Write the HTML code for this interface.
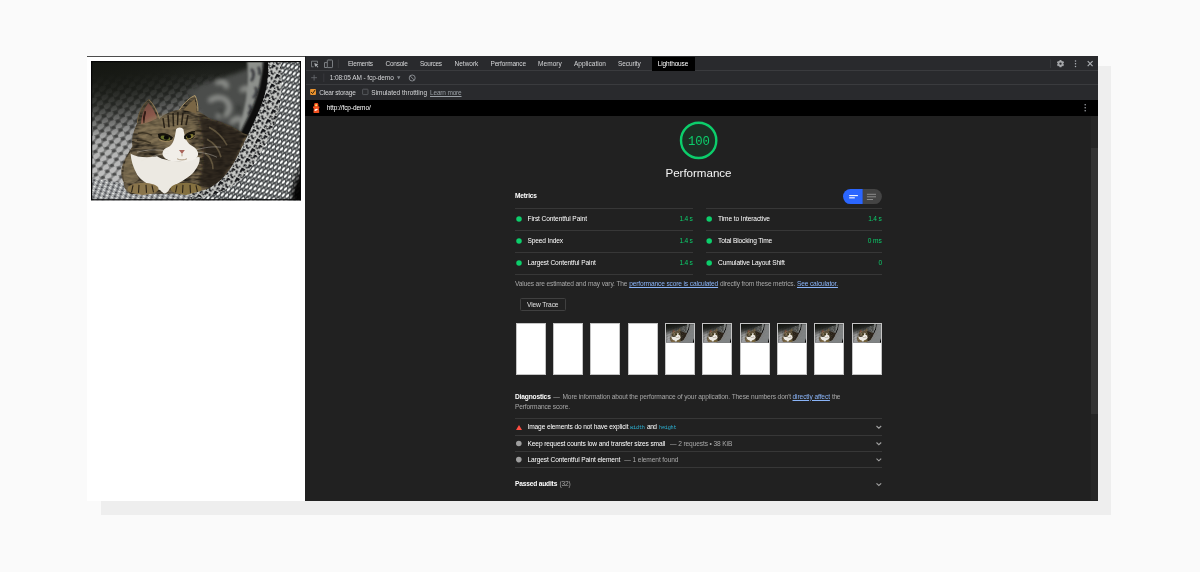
<!DOCTYPE html>
<html><head><meta charset="utf-8"><title>Lighthouse report - fcp-demo</title>
<style>
html,body{margin:0;padding:0;}
body{width:1200px;height:572px;background:#fafafa;position:relative;overflow:hidden;font-family:"Liberation Sans",sans-serif;}
.a{position:absolute;}
.t{position:absolute;white-space:pre;line-height:10px;font-size:6.6px;}
.hl{position:absolute;height:1px;background:#373737;}
.dot{position:absolute;width:5.500px;height:5.500px;border-radius:50%;}
.th{position:absolute;top:323px;width:30px;height:52px;background:#fff;overflow:hidden;box-sizing:border-box;border:1px solid #c4c4c4;}
svg{position:absolute;overflow:visible;}
</style></head><body>
<svg width="0" height="0" style="position:absolute">
<defs>
<linearGradient id="bgv" x1="0" y1="0" x2="0" y2="1">
 <stop offset="0" stop-color="#181a16"/><stop offset="0.2" stop-color="#272926"/>
 <stop offset="0.42" stop-color="#585958"/><stop offset="0.65" stop-color="#7e7f7e"/><stop offset="1" stop-color="#939395"/>
</linearGradient>
<radialGradient id="vig" cx="0" cy="0" r="1" gradientUnits="userSpaceOnUse" gradientTransform="translate(0 0) scale(120 75)">
 <stop offset="0" stop-color="#151712" stop-opacity="0.950"/><stop offset="0.6" stop-color="#151712" stop-opacity="0.500"/><stop offset="1" stop-color="#151712" stop-opacity="0"/>
</radialGradient>
<radialGradient id="vig2" cx="210" cy="139" r="1" gradientUnits="userSpaceOnUse" gradientTransform="translate(212 141) scale(15 40) translate(-210 -139)">
 <stop offset="0" stop-color="#000" stop-opacity="1"/><stop offset="0.550" stop-color="#000" stop-opacity="0.950"/><stop offset="1" stop-color="#000" stop-opacity="0"/>
</radialGradient>
<pattern id="knit" width="12" height="9" patternUnits="userSpaceOnUse" patternTransform="rotate(-16)">
 <ellipse cx="3.300" cy="2.400" rx="4" ry="2.500" fill="#fff" opacity="0.620" transform="rotate(-24 3.300 2.400)"/>
 <ellipse cx="9.300" cy="6.900" rx="4" ry="2.500" fill="#fff" opacity="0.620" transform="rotate(-24 9.300 6.900)"/>
 <ellipse cx="9.300" cy="2.400" rx="2.100" ry="1.400" fill="#000" opacity="0.600"/>
 <ellipse cx="3.300" cy="6.900" rx="2.100" ry="1.400" fill="#000" opacity="0.600"/>
</pattern>
<linearGradient id="knitfade" x1="0" y1="0" x2="0" y2="1">
 <stop offset="0.08" stop-color="#000"/><stop offset="0.28" stop-color="#555"/><stop offset="0.55" stop-color="#ccc"/><stop offset="1" stop-color="#fff"/>
</linearGradient>
<mask id="knitmask"><rect width="210" height="139" fill="url(#knitfade)"/></mask>
<pattern id="herr" width="8" height="6.600" patternUnits="userSpaceOnUse" patternTransform="rotate(-40) skewX(-24)">
 <rect width="8" height="6.600" fill="#3e4144"/>
 <ellipse cx="2.100" cy="1.650" rx="2.200" ry="1.200" fill="#f8faf8"/>
 <ellipse cx="6.100" cy="4.950" rx="2.200" ry="1.200" fill="#f8faf8"/>
 <ellipse cx="6.100" cy="1.650" rx="1.500" ry="0.850" fill="#9a9e9c"/>
 <ellipse cx="2.100" cy="4.950" rx="1.500" ry="0.850" fill="#9a9e9c"/>
</pattern>
<pattern id="speck" width="5" height="4" patternUnits="userSpaceOnUse" patternTransform="rotate(20)">
 <rect width="5" height="4" fill="#9c9ea0"/>
 <rect x="0" y="0" width="2.2" height="1.2" fill="#e8eae8"/><rect x="2.6" y="2" width="2" height="1.3" fill="#3a3c40"/>
 <rect x="3" y="0.3" width="1.2" height="0.9" fill="#50535a"/><rect x="0.4" y="2.4" width="1.4" height="1" fill="#d0d2d0"/>
</pattern>
<pattern id="pais" width="13" height="11" patternUnits="userSpaceOnUse" patternTransform="rotate(28)">
 <rect width="13" height="11" fill="#c6c8c5"/>
 <path d="M1 1h4v2.500h-2v2.500h-2zM7 0.500h2v1.500h2.500v2h-3v-1.500h-1.500zM6 5.500h3.500v1.500h-1.500v2.500h-2zM10.500 6h2v3.500h-1v-1.500h-1zM1.500 7.500h3v1.200h-1.500v1.800h-1.500zM4 9.500h2.500v1h-2.500zM11 0.500h1.500v1.200h-1.500zM5.500 3.200h1.300v1.300h-1.300z" fill="#141518"/>
</pattern>
<filter id="b1" x="-10%" y="-10%" width="120%" height="120%"><feGaussianBlur stdDeviation="1"/></filter>
<filter id="b2" x="-10%" y="-10%" width="120%" height="120%"><feGaussianBlur stdDeviation="2.2"/></filter>
<filter id="b05" x="-10%" y="-10%" width="120%" height="120%"><feGaussianBlur stdDeviation="0.5"/></filter>
<filter id="fur" x="0" y="0" width="100%" height="100%">
 <feTurbulence type="fractalNoise" baseFrequency="0.12 0.35" numOctaves="2" seed="4" result="n"/>
 <feColorMatrix in="n" type="matrix" values="0 0 0 0 0  0 0 0 0 0  0 0 0 0 0  1.6 0 0 0 -0.55" result="a"/>
 <feComposite in="a" in2="SourceGraphic" operator="in"/>
</filter>
<clipPath id="catclip"><rect width="210" height="139"/></clipPath>
<symbol id="cat" viewBox="0 0 210 139" preserveAspectRatio="none">
<g clip-path="url(#catclip)">
 <rect width="210" height="139" fill="url(#bgv)"/>
 <rect width="210" height="139" fill="url(#knit)" mask="url(#knitmask)" opacity="0.800" filter="url(#b05)"/>
 <!-- blurry paisley area behind cat -->
 <g filter="url(#b2)">
  <path d="M95 30C120 18 150 14 172 0L176 0C178 30 168 60 150 95L120 70Z" fill="#4c4e4c"/>
  <path d="M118 40c8-6 18-4 20 4s-6 14-12 10M140 62c6-8 14-4 12 4M125 22c6-3 12 0 10 5M150 30c4-5 10-3 9 3" stroke="#9a9c98" stroke-width="3.5" fill="none"/>
  <path d="M128 50c4 0 5 4 2 6M146 44c3 1 3 5 0 6" stroke="#2c2e2c" stroke-width="3" fill="none"/>
 </g>
 <!-- back band of fabric -->
 <path d="M156 0L176 0C178 14 175 26 172 34C166 48 160 60 150 78C146 70 150 60 153 48C157 32 158 16 156 0Z" fill="#8d908c" filter="url(#b1)"/>
 <path d="M160 8c4 3 3 9 0 12M164 26c3 3 1 8-2 11M158 44c3 2 2 7-1 9M167 6c2 2 2 6 1 8" stroke="#34363a" stroke-width="2.6" fill="none" filter="url(#b1)"/>
 <!-- shadow in fold -->
 <path d="M172 0L179 0C180 20 176 36 168 54C162 68 154 82 146 96L134 102C142 86 150 70 157 56C163 44 168 30 170 16C171 10 172 4 172 0Z" fill="#0b0c0d" filter="url(#b1)"/>
 <!-- floor fabric -->
 <path d="M0 117C20 119 40 124 60 128C90 133 110 131 125 126L210 100L210 139L0 139Z" fill="url(#speck)"/>
 <!-- cat body -->
 <g>
  <path d="M41.5 85C40 78 43 68 46.3 61.700C47 52 52 42 57.800 38.600C62 42 66 50 68.600 57.400C75 52 83 49 88.400 48.700C93 42 99 36 104 34.400C106.500 39 107.500 45 106.900 50.200C111 52 115 55 119.400 57.800C128 60 140 64 152 72L158 74L147 96L131 120C126 125 118 130 109.800 132L40 132.500C35 131 33 126 32.800 121.300C30 116 30 110 30.900 106C33 98 38 91 41.500 85Z" fill="#6e6048"/>
  <path d="M41.5 85C40 78 43 68 46.3 61.700C47 52 52 42 57.800 38.600C62 42 66 50 68.600 57.400C75 52 83 49 88.400 48.700C93 42 99 36 104 34.400C106.500 39 107.500 45 106.900 50.200C111 52 115 55 119.400 57.800C128 60 140 64 152 72L158 74L147 96L131 120C126 125 118 130 109.800 132L40 132.500C35 131 33 126 32.800 121.300C30 116 30 110 30.900 106C33 98 38 91 41.500 85Z" fill="#15110a" filter="url(#fur)"/>
  <!-- darker back of body -->
  <path d="M108 56C122 58 142 64 154 74L146 96L130 120C122 128 112 128 108 122C112 108 114 92 112 80Z" fill="#241d13" opacity="0.800" filter="url(#b1)"/>
  <path d="M118 66c8 4 14 10 18 18M116 78c8 4 12 10 14 18M114 92c6 4 8 10 8 16" stroke="#8a7a58" stroke-width="1.600" opacity="0.550" fill="none" filter="url(#b05)"/>
  <!-- left body lighter -->
  <path d="M40 90C34 98 31 108 33 120C38 124 44 122 48 118C44 110 41 100 40 90Z" fill="#8a7a5a" opacity="0.600" filter="url(#b05)"/>
  <!-- ears inner -->
  <path d="M57.500 42C53 47 50.500 55 50 63C55 62 61 60 66 57C64 51 61 45.500 57.500 42Z" fill="#a06454" filter="url(#b05)"/>
  <path d="M54.500 50C53 54 52.500 58 52.800 62" stroke="#3a1e18" stroke-width="2" fill="none" filter="url(#b05)"/>
  <path d="M57.800 38.600C62 42 66 50 68.600 57.400" stroke="#b49a6c" stroke-width="1" fill="none"/>
  <path d="M46.300 61.700C47 52 52 42 57.800 38.600" stroke="#8a744e" stroke-width="0.900" fill="none"/>
  <path d="M103.500 38C99 41.500 95.500 45.500 92.500 49C97 49.500 102 50.500 105.500 52.500C105.800 47 105 42 103.500 38Z" fill="#7a6644" filter="url(#b05)"/>
  <path d="M88.400 48.700C93 42 99 36 104 34.400C106 38 107 44 106.900 50.200" stroke="#b8a070" stroke-width="0.900" fill="none"/>
  <!-- head lighter -->
  <ellipse cx="77" cy="70" rx="30" ry="17" fill="#958360" opacity="0.500" filter="url(#b1)"/>
  <path d="M72 57l1.500 10M77 54l1 12M82 52l0.500 13M87 51l-0.500 13M92 52l-1.500 12M97 54l-2 10" stroke="#1c160e" stroke-width="1.500" opacity="0.850"/>
  <path d="M47 72c5-1 10 0 14 2M46 79c5 0 10 1 14 3M104 70c3-1 5-1 7 0" stroke="#2a2216" stroke-width="1.400" opacity="0.700" fill="none"/>
  <!-- white chest -->
  <path d="M39.600 92.500C46 96 56 97 66 95C74 100 92 102 100 98C104 96 108 95 108.800 96.300C109 102 106 107 102 111.700C96 118 86 122 79 127C77 131 75 132.500 73 132C71 131 70 130 69.400 129C60 125 50 119 46.300 113.600C42 106 40 99 39.600 92.500Z" fill="#ece9e2" filter="url(#b05)"/>
  <!-- muzzle + blaze white -->
  <path d="M85 68.400C86.500 65.500 91 65.500 92.500 68.400C93.500 75 95 81 100 84C106 87 109 92 106 96C102 100 94 101 88.600 100.500C82 101 75 99 72.300 95C70 91 73 87 78 85.500C82.500 83 84 76 85 68.400Z" fill="#f1eee8" filter="url(#b05)"/>
  <!-- eyes -->
  <ellipse cx="74.200" cy="76.100" rx="7.200" ry="3.500" fill="#15120b" transform="rotate(12 74.200 76.100)"/>
  <ellipse cx="74.600" cy="76.700" rx="5" ry="2.100" fill="#66702a" transform="rotate(12 74.200 76.100)"/>
  <ellipse cx="75.400" cy="76.500" rx="2.600" ry="2.100" fill="#0a0a07"/>
  <path d="M67 73.500C71 72 77 73 81.500 77" stroke="#15120b" stroke-width="1.600" fill="none"/>
  <path d="M68 78.500C72 80.500 77 80.500 81 79" stroke="#c8a86c" stroke-width="0.700" fill="none" opacity="0.800"/>
  <ellipse cx="98.600" cy="74.800" rx="5.800" ry="3.400" fill="#15120b" transform="rotate(-22 98.600 74.800)"/>
  <ellipse cx="98.600" cy="75.400" rx="4" ry="2.100" fill="#7a7430" transform="rotate(-22 98.600 74.800)"/>
  <ellipse cx="98" cy="75.200" rx="2.100" ry="2.100" fill="#0a0a07"/>
  <path d="M93.500 76C96 72.500 100 70.500 104 70.500" stroke="#15120b" stroke-width="1.500" fill="none"/>
  <path d="M94.500 78.500C98 78.500 102 76.500 104 73.500" stroke="#c8a86c" stroke-width="0.700" fill="none" opacity="0.800"/>
  <!-- nose & mouth -->
  <path d="M88 88.800L93.800 88.800L91 92.800Z" fill="#a8645a"/>
  <path d="M91 92.800V95M86 97.500c3 1.500 7 1.500 10 0" stroke="#a89478" stroke-width="0.900" fill="none"/>
  <!-- paws -->
  <ellipse cx="52" cy="127.500" rx="15.500" ry="6" fill="#8a744c" filter="url(#b05)"/>
  <ellipse cx="95" cy="127.500" rx="15.500" ry="6" fill="#84703f" filter="url(#b05)"/>
  <path d="M42 124l-1.500 7M48 123.500l-0.500 8M55 123.500l0.500 8M61 124l1.500 7M86 124l-1.500 7M92 123.500l-0.500 8M99 123.500l0.500 8M105 124l1.500 7" stroke="#2a2216" stroke-width="1.100"/>
  <!-- whiskers -->
  <path d="M78 90C66 88 56 88 46 91M78 92C66 93 58 96 50 100M104 89C114 86 122 85 130 86M104 91C113 91 120 93 126 96" stroke="#e8e4da" stroke-width="0.450" fill="none" opacity="0.800"/>
 </g>
 <!-- right fabric -->
 <path d="M177 0L210 0L210 139L92 139C106 134 118 128 126 122C136 114 142 104 148 92C158 72 166 56 172 40C176 28 178 14 177 0Z" fill="url(#herr)"/>
 <!-- paisley border of right fabric -->
 <path d="M177 0L190 0C192 22 190 44 184 62C176 84 164 104 148 120C138 128 126 133 112 136L96 133C112 130 120 127 126 122C136 114 142 104 148 92C158 72 166 56 172 40C176 28 178 14 177 0Z" fill="url(#pais)"/>
 <rect width="210" height="139" fill="url(#vig)"/>
 <rect width="210" height="139" fill="url(#vig2)"/>
 <rect x="0.500" y="0.500" width="209" height="138" fill="none" stroke="#050505" stroke-width="1.400"/>
</g>
</symbol>
</defs>
</svg>

<div class="a" style="left:101px;top:66px;width:1009.8px;height:449px;background:#eeeeee"></div>
<div class="a" style="left:87px;top:56px;width:218px;height:444.5px;background:#fff"></div>
<div class="a" style="left:87px;top:56px;width:218px;height:1px;background:#4c4c4c"></div>
<svg class="a" style="left:91px;top:61px" width="210" height="139.400"><use href="#cat" width="210" height="139.400"/></svg>

<!-- devtools -->
<div class="a" style="left:305px;top:56px;width:793px;height:444.5px;background:#212121"></div>
<div class="a" style="left:305px;top:56px;width:793px;height:43.7px;background:#292a2d"></div>
<div class="a" style="left:305px;top:70px;width:793px;height:1px;background:#3a3b3e"></div>
<div class="a" style="left:305px;top:84px;width:793px;height:1px;background:#3a3b3e"></div>
<div class="a" style="left:305px;top:99.600px;width:793px;height:16.200px;background:#000"></div>
<div class="a" style="left:652px;top:56.500px;width:43px;height:14px;background:#000"></div>
<div class="a" style="left:305px;top:56px;width:1px;height:43.600px;background:#1b1c1e"></div>
<!-- scrollbar -->
<div class="a" style="left:1091px;top:115.800px;width:7px;height:384.700px;background:#262626"></div>
<div class="a" style="left:1091px;top:148px;width:7px;height:266px;background:#333333"></div>

<!-- toolbar icons -->
<svg style="left:0;top:0" width="1200" height="572" viewBox="0 0 1200 572" fill="none">
 <!-- inspect -->
 <path d="M317.500 63.300V61.200H311.500V66.800H313.600" stroke="#7d8185" stroke-width="0.900"/>
 <path d="M314.300 62.900L318.400 64.500L316.800 65.200L318.400 67L317.600 67.600L316.100 65.800L315.200 67.100Z" fill="#a9adb1"/>
 <!-- device -->
 <rect x="327.300" y="60" width="5.200" height="7.600" rx="0.700" stroke="#84888c" stroke-width="0.900"/>
 <path d="M327 62.600H324.500V67.500H327.300" stroke="#84888c" stroke-width="0.900"/>
 <path d="M338.300 59.500V68" stroke="#3c3e41" stroke-width="0.800"/>
 <!-- plus -->
 <path d="M311.200 77.700H317M314.100 74.800V80.600" stroke="#64686c" stroke-width="0.900"/>
 <path d="M323.800 73.500V82" stroke="#3c3e41" stroke-width="0.800"/>
 <!-- dropdown arrow -->
 <path d="M397 76.200L400.400 76.200L398.700 79.400Z" fill="#84888c"/>
 <!-- clear -->
 <circle cx="412.200" cy="78" r="3" stroke="#8d9195" stroke-width="0.900"/>
 <path d="M410.100 75.900L414.300 80.100" stroke="#8d9195" stroke-width="0.900"/>
 <!-- checkboxes -->
 <rect x="310.100" y="88.900" width="5.900" height="6" rx="0.800" fill="#ea932f"/>
 <path d="M311.100 92L312.600 93.600L315.200 89.900" stroke="#2e210c" stroke-width="1"/>
 <rect x="362.600" y="89.200" width="5.400" height="5.400" rx="0.600" stroke="#5f6266" stroke-width="0.800" fill="#2c2d30"/>
 <!-- lighthouse logo -->
 <rect x="314.200" y="102.900" width="4.100" height="4" rx="1.300" fill="#f2501f"/>
 <circle cx="316.200" cy="105.400" r="1.050" fill="#ffdf60"/>
 <rect x="313" y="106.200" width="6.400" height="2.200" rx="0.900" fill="#f2501f"/>
 <path d="M313.900 108H318.800L319.300 112.300C319.300 112.800 319 113.100 318.500 113.100H314.100C313.600 113.100 313.300 112.800 313.400 112.300Z" fill="#f2501f"/>
 <ellipse cx="316.100" cy="109.800" rx="1.800" ry="0.850" fill="#fff" transform="rotate(-24 316.100 109.800)"/>
 <!-- right icons -->
 <path d="M1050.500 59.500V68" stroke="#3a3c3f" stroke-width="0.800"/>
 <g transform="translate(1060.500 63.650)">
  <circle r="2" stroke="#a4a6a9" stroke-width="1.700"/>
  <path d="M0.00 -2.30L0.00 -3.60M1.99 -1.15L3.12 -1.80M1.99 1.15L3.12 1.80M0.00 2.30L0.00 3.60M-1.99 1.15L-3.12 1.80M-1.99 -1.15L-3.12 -1.80" stroke="#a4a6a9" stroke-width="1.900"/>
 </g>
 <g fill="#aeb2b7"><circle cx="1075.500" cy="60.900" r="0.750"/><circle cx="1075.500" cy="63.700" r="0.750"/><circle cx="1075.500" cy="66.500" r="0.750"/></g>
 <path d="M1087.700 61.200L1092.600 66.100M1092.600 61.200L1087.700 66.100" stroke="#a8abaf" stroke-width="1.200"/>
 <g fill="#9a9da2"><circle cx="1085.200" cy="104.700" r="0.800"/><circle cx="1085.200" cy="107.700" r="0.800"/><circle cx="1085.200" cy="110.700" r="0.800"/></g>
 <!-- gauge -->
 <circle cx="698.650" cy="140.400" r="17.650" fill="#1b3024" stroke="#0cce6b" stroke-width="2.400"/>
 <!-- toggle -->
 <path d="M850.500 189.100H862.800V204.100H850.500A7.500 7.500 0 0 1 850.500 189.100Z" fill="#2b66ff"/>
 <path d="M862.800 189.100H874.400A7.500 7.500 0 0 1 874.400 204.100H862.800Z" fill="#444444"/>
 <path d="M849.200 195.600H857.900" stroke="#fff" stroke-width="1.100"/><path d="M849.200 197.800H854.800" stroke="#dfe6ff" stroke-width="1.300"/>
 <path d="M866.900 194.300H876M866.900 196.800H876M866.900 199.500H873" stroke="#8c8c8c" stroke-width="1"/>
 <circle cx="519" cy="219.100" r="2.750" fill="#0cce6b"/><circle cx="519" cy="241.100" r="2.750" fill="#0cce6b"/><circle cx="519" cy="263.100" r="2.750" fill="#0cce6b"/><circle cx="709.200" cy="219.100" r="2.750" fill="#0cce6b"/><circle cx="709.200" cy="241.100" r="2.750" fill="#0cce6b"/><circle cx="709.200" cy="263.100" r="2.750" fill="#0cce6b"/>
 <!-- audit icons -->
 <circle cx="518.800" cy="443.500" r="2.800" fill="#9e9e9e"/><circle cx="518.800" cy="459.600" r="2.800" fill="#9e9e9e"/>
 <path d="M519 424.900L522 429.900H516Z" fill="#ff4e42"/>
 <g fill="none" stroke="#a0a0a0" stroke-width="1.100">
  <path d="M876.500 426.000L878.850 428.200L881.200 426.000"/>
  <path d="M876.500 442.500L878.850 444.700L881.200 442.500"/>
  <path d="M876.500 458.600L878.850 460.800L881.200 458.600"/>
  <path d="M876.500 483.300L878.850 485.500L881.200 483.300"/>
 </g>
</svg>
<!-- dots -->
<!-- lines -->
<div class="hl" style="left:515px;top:208px;width:177.700px"></div>
<div class="hl" style="left:515px;top:230px;width:177.700px"></div>
<div class="hl" style="left:515px;top:252px;width:177.700px"></div>
<div class="hl" style="left:515px;top:274px;width:177.700px"></div>
<div class="hl" style="left:705.500px;top:208px;width:176.500px"></div>
<div class="hl" style="left:705.500px;top:230px;width:176.500px"></div>
<div class="hl" style="left:705.500px;top:252px;width:176.500px"></div>
<div class="hl" style="left:705.500px;top:274px;width:176.500px"></div>
<div class="hl" style="left:515px;top:418px;width:367px"></div>
<div class="hl" style="left:515px;top:435px;width:367px"></div>
<div class="hl" style="left:515px;top:451px;width:367px"></div>
<div class="hl" style="left:515px;top:467px;width:367px"></div>
<!-- view trace button -->
<div class="a" style="left:520px;top:298.300px;width:45.700px;height:12.600px;box-sizing:border-box;border:1px solid #404040;border-radius:1.500px"></div>
<!-- filmstrip -->
<div class="th" style="left:515.500px"></div>
<div class="th" style="left:552.800px"></div>
<div class="th" style="left:590.200px"></div>
<div class="th" style="left:627.500px"></div>
<div class="th" style="left:664.900px"><svg style="left:0.100px;top:0.100px" width="28.200" height="18.700"><use href="#cat" width="28.200" height="18.700"/></svg></div>
<div class="th" style="left:702.200px"><svg style="left:0.100px;top:0.100px" width="28.200" height="18.700"><use href="#cat" width="28.200" height="18.700"/></svg></div>
<div class="th" style="left:739.600px"><svg style="left:0.100px;top:0.100px" width="28.200" height="18.700"><use href="#cat" width="28.200" height="18.700"/></svg></div>
<div class="th" style="left:776.900px"><svg style="left:0.100px;top:0.100px" width="28.200" height="18.700"><use href="#cat" width="28.200" height="18.700"/></svg></div>
<div class="th" style="left:814.300px"><svg style="left:0.100px;top:0.100px" width="28.200" height="18.700"><use href="#cat" width="28.200" height="18.700"/></svg></div>
<div class="th" style="left:851.600px"><svg style="left:0.100px;top:0.100px" width="28.200" height="18.700"><use href="#cat" width="28.200" height="18.700"/></svg></div>
<!-- text -->
<div class="a" style="left:0;top:0;width:1200px;height:572px;will-change:transform">
<span class="t" style='left:348.0px;top:58.9px;font-size:6.5px;color:#d5d6d8;letter-spacing:-0.301px;'>Elements</span>
<span class="t" style='left:385.5px;top:58.9px;font-size:6.5px;color:#d5d6d8;letter-spacing:-0.260px;'>Console</span>
<span class="t" style='left:420.0px;top:58.9px;font-size:6.5px;color:#d5d6d8;letter-spacing:-0.310px;'>Sources</span>
<span class="t" style='left:454.6px;top:58.9px;font-size:6.5px;color:#d5d6d8;letter-spacing:-0.024px;'>Network</span>
<span class="t" style='left:490.5px;top:58.9px;font-size:6.5px;color:#d5d6d8;letter-spacing:-0.172px;'>Performance</span>
<span class="t" style='left:538.0px;top:58.9px;font-size:6.5px;color:#d5d6d8;letter-spacing:0.063px;'>Memory</span>
<span class="t" style='left:574.0px;top:58.9px;font-size:6.5px;color:#d5d6d8;letter-spacing:0.019px;'>Application</span>
<span class="t" style='left:618.0px;top:58.9px;font-size:6.5px;color:#d5d6d8;letter-spacing:-0.098px;'>Security</span>
<span class="t" style='left:657.8px;top:58.9px;font-size:6.5px;color:#ffffff;letter-spacing:-0.146px;'>Lighthouse</span>
<span class="t" style='left:329.7px;top:72.9px;font-size:6.5px;color:#d5d6d8;letter-spacing:-0.083px;'>1:08:05 AM - fcp-demo</span>
<span class="t" style='left:319.2px;top:87.8px;font-size:6.5px;color:#d5d6d8;letter-spacing:-0.203px;'>Clear storage</span>
<span class="t" style='left:371.3px;top:87.8px;font-size:6.5px;color:#d5d6d8;letter-spacing:0.003px;'>Simulated throttling</span>
<span class="t" style='left:430.0px;top:87.8px;font-size:6.5px;color:#9aa0a6;letter-spacing:-0.172px;text-decoration:underline;'>Learn more</span>
<span class="t" style='left:326.7px;top:102.7px;font-size:6.5px;color:#ffffff;letter-spacing:-0.071px;'>http://fcp-demo/</span>
<span class="t" style='left:687.9px;top:137.2px;font-size:12.3px;color:#0cce6b;letter-spacing:-0.070px;font-family:"Liberation Mono",monospace;'>100</span>
<span class="t" style='left:665.5px;top:168.2px;font-size:11.6px;color:#f5f5f5;letter-spacing:-0.037px;'>Performance</span>
<span class="t" style='left:515.0px;top:191.3px;font-size:6.6px;color:#ffffff;letter-spacing:-0.182px;font-weight:700;'>Metrics</span>
<span class="t" style='left:527.5px;top:214.2px;font-size:6.6px;color:#ffffff;letter-spacing:-0.099px;'>First Contentful Paint</span>
<span class="t" style='left:679.5px;top:214.2px;font-size:6.6px;color:#0cce6b;letter-spacing:-0.274px;'>1.4 s</span>
<span class="t" style='left:527.5px;top:236.2px;font-size:6.6px;color:#ffffff;letter-spacing:-0.153px;'>Speed Index</span>
<span class="t" style='left:679.5px;top:236.2px;font-size:6.6px;color:#0cce6b;letter-spacing:-0.274px;'>1.4 s</span>
<span class="t" style='left:527.5px;top:258.2px;font-size:6.6px;color:#ffffff;letter-spacing:-0.107px;'>Largest Contentful Paint</span>
<span class="t" style='left:679.5px;top:258.2px;font-size:6.6px;color:#0cce6b;letter-spacing:-0.274px;'>1.4 s</span>
<span class="t" style='left:718.0px;top:214.2px;font-size:6.6px;color:#ffffff;letter-spacing:-0.111px;'>Time to Interactive</span>
<span class="t" style='left:868.3px;top:214.2px;font-size:6.6px;color:#0cce6b;letter-spacing:-0.224px;'>1.4 s</span>
<span class="t" style='left:718.0px;top:236.2px;font-size:6.6px;color:#ffffff;letter-spacing:-0.140px;'>Total Blocking Time</span>
<span class="t" style='left:867.7px;top:236.2px;font-size:6.6px;color:#0cce6b;letter-spacing:-0.099px;'>0 ms</span>
<span class="t" style='left:718.0px;top:258.2px;font-size:6.6px;color:#ffffff;letter-spacing:-0.125px;'>Cumulative Layout Shift</span>
<span class="t" style='left:878.5px;top:258.2px;font-size:6.6px;color:#0cce6b;letter-spacing:0.000px;'>0</span>
<span class="t" style='left:515.0px;top:279.0px;font-size:6.6px;color:#a8a8a8;letter-spacing:-0.129px;'>Values are estimated and may vary. The</span>
<span class="t" style='left:629.2px;top:279.0px;font-size:6.6px;color:#8ab4f8;letter-spacing:-0.136px;text-decoration:underline;'>performance score is calculated</span>
<span class="t" style='left:720.0px;top:279.0px;font-size:6.6px;color:#a8a8a8;letter-spacing:-0.129px;'>directly from these metrics.</span>
<span class="t" style='left:797.0px;top:279.0px;font-size:6.6px;color:#8ab4f8;letter-spacing:-0.155px;text-decoration:underline;'>See calculator.</span>
<span class="t" style='left:527.0px;top:300.0px;font-size:6.6px;color:#e0e0e0;letter-spacing:-0.111px;'>View Trace</span>
<span class="t" style='left:515.0px;top:391.7px;font-size:6.6px;color:#ffffff;letter-spacing:-0.158px;font-weight:700;'>Diagnostics</span>
<span class="t" style='left:553.3px;top:391.7px;font-size:6.6px;color:#a8a8a8;letter-spacing:0.000px;'>—</span>
<span class="t" style='left:562.5px;top:391.7px;font-size:6.6px;color:#a8a8a8;letter-spacing:-0.123px;'>More information about the performance of your application. These numbers don&#x27;t</span>
<span class="t" style='left:792.5px;top:391.7px;font-size:6.6px;color:#8ab4f8;letter-spacing:-0.088px;text-decoration:underline;'>directly affect</span>
<span class="t" style='left:832.0px;top:391.7px;font-size:6.6px;color:#a8a8a8;letter-spacing:-0.336px;'>the</span>
<span class="t" style='left:515.0px;top:402.2px;font-size:6.6px;color:#a8a8a8;letter-spacing:-0.150px;'>Performance score.</span>
<span class="t" style='left:527.5px;top:422.4px;font-size:6.6px;color:#ffffff;letter-spacing:-0.124px;'>Image elements do not have explicit</span>
<span class="t" style='left:630.0px;top:423.4px;font-size:5.2px;color:#2cb2d4;letter-spacing:-0.145px;font-family:"Liberation Mono",monospace;'>width</span>
<span class="t" style='left:647.0px;top:422.4px;font-size:6.6px;color:#ffffff;letter-spacing:-0.508px;'>and</span>
<span class="t" style='left:659.0px;top:423.4px;font-size:5.2px;color:#2cb2d4;letter-spacing:-0.237px;font-family:"Liberation Mono",monospace;'>height</span>
<span class="t" style='left:527.5px;top:438.9px;font-size:6.6px;color:#ffffff;letter-spacing:-0.117px;'>Keep request counts low and transfer sizes small</span>
<span class="t" style='left:670.0px;top:438.9px;font-size:6.6px;color:#a8a8a8;letter-spacing:-0.116px;'>— 2 requests • 38 KiB</span>
<span class="t" style='left:527.5px;top:455.0px;font-size:6.6px;color:#ffffff;letter-spacing:-0.105px;'>Largest Contentful Paint element</span>
<span class="t" style='left:624.3px;top:455.0px;font-size:6.6px;color:#a8a8a8;letter-spacing:-0.095px;'>— 1 element found</span>
<span class="t" style='left:515.0px;top:479.2px;font-size:6.6px;color:#ffffff;letter-spacing:-0.170px;font-weight:700;'>Passed audits</span>
<span class="t" style='left:559.5px;top:479.2px;font-size:6.6px;color:#a8a8a8;letter-spacing:-0.145px;'>(32)</span>
</div>
</body></html>
